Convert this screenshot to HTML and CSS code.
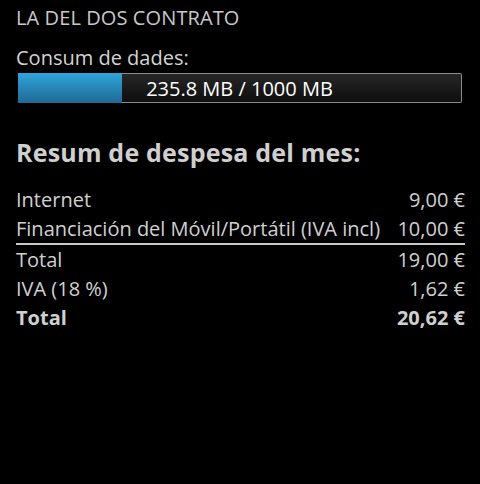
FILE: index.html
```html
<!DOCTYPE html>
<html>
<head>
<meta charset="utf-8">
<link rel="stylesheet" href="styles.css">
</head>
<body>
<div class="page">
  <div class="title">LA DEL DOS CONTRATO</div>
  <div class="label">Consum de dades:</div>
  <div class="bar">
    <div class="fill" style="width:23.5%"></div>
    <div class="bar-text">235.8 MB / 1000 MB</div>
  </div>
  <h2 class="heading">Resum de despesa del mes:</h2>
  <div class="rows">
    <div class="row"><span>Internet</span><span>9,00 €</span></div>
    <div class="row sep"><span>Financiación del Móvil/Portátil (IVA incl)</span><span>10,00 €</span></div>
    <div class="row"><span>Total</span><span>19,00 €</span></div>
    <div class="row"><span>IVA (18 %)</span><span>1,62 €</span></div>
    <div class="row bold"><span>Total</span><span>20,62 €</span></div>
  </div>
</div>
</body>
</html>
```
FILE: styles.css
```css
html, body {
  margin: 0;
  background: #000;
}
.page {
  font-family: "Open Sans", "DejaVu Sans", sans-serif;
  color: #d0d0d0;
  padding: 4px 15px 0 16px;
  width: 449px;
}
.title {
  font-size: 20px;
  line-height: 28px;
  color: #c8c8c8;
  letter-spacing: 0.1px;
}
.label {
  margin-top: 12px;
  font-size: 20px;
  line-height: 28px;
  color: #d4d4d4;
}
.bar {
  position: relative;
  margin: 1px 3px 0 2px;
  height: 28px;
  border: 1px solid #8a8a8a;
  border-left: none;
  border-radius: 2px;
  background: linear-gradient(#262626, #0e0e0e);
  display: flex;
  align-items: center;
  justify-content: center;
}
.fill {
  position: absolute;
  left: 0;
  top: -1px;
  bottom: -1px;
  background: linear-gradient(#2fa4dc, #1f6994);
}
.bar-text {
  position: relative;
  font-size: 20px;
  color: #fff;
}
.heading {
  margin: 33px 0 0;
  font-size: 25px;
  line-height: 32px;
  letter-spacing: 0.2px;
  font-weight: bold;
  color: #cfcfcf;
}
.rows {
  margin-top: 17px;
}
.row {
  display: flex;
  justify-content: space-between;
  font-size: 20px;
  line-height: 29px;
  color: #d0d0d0;
}
.row.sep {
  border-bottom: 2px solid #c8c8c8;
  line-height: 29px;
}
.row.bold {
  font-weight: bold;
}
```
